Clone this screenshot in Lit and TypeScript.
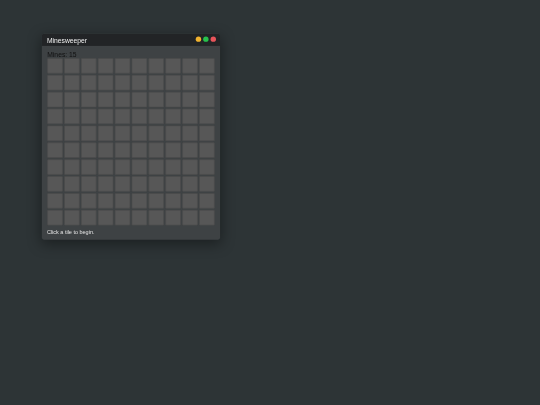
import { LitElement, html, css } from "lit";
import { customElement } from "lit/decorators.js";

@customElement("app-root")
export class AppRoot extends LitElement {
  static styles = css`
    :host { display: block; width: 540px; height: 405px; overflow: hidden; background: #2d3436; }
    .page { width: 800px; height: 600px; transform: scale(.675); transform-origin: 0 0; box-sizing: border-box; padding: 50px 0 0 62px; font-family: "Liberation Sans", Arial, sans-serif; filter: blur(.3px); }
    .win { width: 264px; height: 305px; background: #3e4244; box-shadow: 0 6px 20px rgba(0,0,0,.4); display: flex; flex-direction: column; border-radius: 3px; overflow: hidden; }
    .bar { height: 18px; background: #222426; display: flex; align-items: center; padding: 0 6px 0 7.5px; flex: none; color: #f0f0f0; font-size: 10px; }
    .title { flex: 1; }
    .dots { display: flex; gap: 3px; margin-bottom: 2px; }
    .dot { width: 8px; height: 8px; border-radius: 50%; }
    .body { padding: 7px 8px 0; display: flex; flex-direction: column; flex: 1; }
    .mines { font-size: 10px; line-height: 11px; color: #111; }
    .grid { display: grid; grid-template-columns: repeat(10, 23px); grid-auto-rows: 23px; gap: 2px; }
    .cell { background: #575757; border: 1px solid #4c4c4c; box-sizing: border-box; border-radius: 1px; }
    .status { font-size: 8.15px; color: #e4e4e4; margin-top: 5px; line-height: 10px; margin-left: -.5px; }
  `;
  render() {
    return html`<div class="page"><div class="win">
      <div class="bar"><span class="title">Minesweeper</span>
        <div class="dots">
          <span class="dot" style="background:#f1b32f"></span>
          <span class="dot" style="background:#27c24c"></span>
          <span class="dot" style="background:#e9545a"></span>
        </div>
      </div>
      <div class="body">
        <div class="mines">Mines: 15</div>
        <div class="grid">${Array.from({ length: 100 }, () => html`<div class="cell"></div>`)}</div>
        <div class="status">Click a tile to begin.</div>
      </div>
    </div></div>`;
  }
}
